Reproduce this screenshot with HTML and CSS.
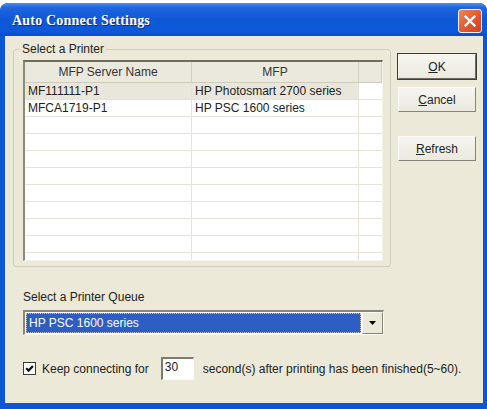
FILE: index.html
```html
<!DOCTYPE html>
<html lang="en">
<head>
    <meta charset="UTF-8">
    <meta name="viewport" content="width=device-width, initial-scale=1.0">
    <title>Auto Connect Settings</title>
    <link rel="stylesheet" href="styles.css">
</head>
<body>

<div class="window">
    <div class="titlebar">
        <span class="title">Auto Connect Settings</span>
        <span class="close">
            <svg width="12" height="12" viewBox="0 0 12 12"><path d="M1.5 1.5 L10.5 10.5 M10.5 1.5 L1.5 10.5" stroke="#fff" stroke-width="2.4" stroke-linecap="square"/></svg>
        </span>
    </div>

    <div class="dialog">
        <div class="top">
            <fieldset class="group">
                <legend>Select a Printer</legend>
                <div class="list">
                    <div class="row head">
                        <div class="cell c1">MFP Server Name</div>
                        <div class="cell c2">MFP</div>
                        <div class="cell c3"></div>
                    </div>
                    <div class="row sel">
                        <div class="cell c1">MF111111-P1</div>
                        <div class="cell c2">HP Photosmart 2700 series</div>
                        <div class="cell c3"></div>
                    </div>
                    <div class="row">
                        <div class="cell c1">MFCA1719-P1</div>
                        <div class="cell c2">HP PSC 1600 series</div>
                        <div class="cell c3"></div>
                    </div>
                    <div class="row"><div class="cell c1"></div><div class="cell c2"></div><div class="cell c3"></div></div>
                    <div class="row"><div class="cell c1"></div><div class="cell c2"></div><div class="cell c3"></div></div>
                    <div class="row"><div class="cell c1"></div><div class="cell c2"></div><div class="cell c3"></div></div>
                    <div class="row"><div class="cell c1"></div><div class="cell c2"></div><div class="cell c3"></div></div>
                    <div class="row"><div class="cell c1"></div><div class="cell c2"></div><div class="cell c3"></div></div>
                    <div class="row"><div class="cell c1"></div><div class="cell c2"></div><div class="cell c3"></div></div>
                    <div class="row"><div class="cell c1"></div><div class="cell c2"></div><div class="cell c3"></div></div>
                    <div class="row"><div class="cell c1"></div><div class="cell c2"></div><div class="cell c3"></div></div>
                    <div class="row"><div class="cell c1"></div><div class="cell c2"></div><div class="cell c3"></div></div>
                </div>
            </fieldset>

            <div class="buttons">
                <button class="btn default"><u>O</u>K</button>
                <button class="btn"><u>C</u>ancel</button>
                <button class="btn refresh"><u>R</u>efresh</button>
            </div>
        </div>

        <div class="queue">
            <div class="label">Select a Printer Queue</div>
            <div class="combo">
                <div class="combo-value"><span>HP PSC 1600 series</span></div>
                <div class="combo-arrow">
                    <svg width="7" height="4" viewBox="0 0 7 4"><path d="M0 0 H7 L3.5 4 Z" fill="#000"/></svg>
                </div>
            </div>
        </div>

        <div class="keep">
            <span class="check">
                <svg width="9" height="9" viewBox="0 0 9 9"><path d="M1.2 4.2 L3.6 6.6 L7.9 2" fill="none" stroke="#111" stroke-width="2.2"/></svg>
            </span>
            <span class="keep-text">Keep connecting for</span>
            <span class="seconds">30</span>
            <span class="after-text">second(s) after printing has been finished(5~60).</span>
        </div>
    </div>
</div>

</body>
</html>
```

FILE: styles.css
```css
body {
    margin: 0;
    background-color: #fff;
    font-family: "Liberation Sans", Arial, sans-serif;
    font-size: 12px;
    color: #222;
}
.window {
    margin-top: 3px;
    width: 487px;
    height: 406px;
    box-sizing: border-box;
    display: flex;
    flex-direction: column;
    background-color: #0D55D2;
    border-radius: 8px 8px 0 0;
    overflow: hidden;
}
.titlebar {
    height: 33px;
    flex-shrink: 0;
    display: flex;
    align-items: center;
    justify-content: space-between;
    padding: 2px 5px 0 12px;
    box-sizing: border-box;
    background: linear-gradient(#4a8ff0 0%, #1f66de 14%, #0f58d6 50%, #0d58da 85%, #0a4cc0 100%);
}
.title {
    font-family: "Liberation Serif", "Times New Roman", serif;
    font-weight: bold;
    font-size: 14px;
    letter-spacing: 0.2px;
    color: #fff;
    text-shadow: 1px 1px 0 #0a2a8a;
}
.close {
    width: 22px;
    height: 22px;
    display: flex;
    align-items: center;
    justify-content: center;
    border: 1px solid #f2f2f2;
    border-radius: 3px;
    background: linear-gradient(135deg, #f0845c 0%, #e4562e 55%, #cf3f1e 100%);
}
.dialog {
    flex-grow: 1;
    margin: 0 4px 6px 5px;
    background-color: #ECE9D8;
    padding: 6px 7px 0 8px;
}
.top {
    display: flex;
    align-items: flex-start;
}
.group {
    margin: 0;
    width: 378px;
    box-sizing: border-box;
    padding: 4px 7px 5px 9px;
    border: 1px solid #D0CEBF;
    border-radius: 3px;
}
.group legend {
    margin-left: -3px;
    padding: 0 2px;
    line-height: 14px;
}
.list {
    height: 198px;
    overflow: hidden;
    background-color: #fff;
    border-style: solid;
    border-width: 2px 1px 1px 2px;
    border-color: #6f6d62 #f4f3ec #f4f3ec #8c8a7e;
}
.row {
    display: flex;
    height: 17px;
    box-sizing: border-box;
    border-bottom: 1px solid #E6E4DA;
}
.row.head {
    height: 21px;
    background-color: #EBE9DE;
    border-bottom: 1px solid #CFCBBB;
}
.row.sel .c1, .row.sel .c2 {
    background-color: #E9E7DC;
}
.cell {
    box-sizing: border-box;
    padding-left: 3px;
    line-height: 16px;
    white-space: nowrap;
    overflow: hidden;
    border-right: 1px solid #E6E4DA;
}
.head .cell {
    line-height: 20px;
    text-align: center;
    padding-left: 0;
    color: #333;
    border-right: 1px solid #D3D0C2;
}
.c1 {
    width: 167px;
}
.c2 {
    width: 167px;
}
.c3 {
    flex-grow: 1;
    border-right: none;
}
.buttons {
    margin: 12px 0 0 7px;
    display: flex;
    flex-direction: column;
    gap: 8px;
}
.btn {
    width: 78px;
    height: 25px;
    font-family: "Liberation Sans", Arial, sans-serif;
    font-size: 12px;
    color: #222;
    background: linear-gradient(#f6f5ef, #ebe9df);
    border: 1px solid;
    border-color: #fbfbf8 #85837a #85837a #fbfbf8;
    padding: 0;
}
.btn.default {
    outline: 1px solid #3c3c38;
    border-color: #f6f5ef #6a6860 #6a6860 #f6f5ef;
}
.btn.refresh {
    margin-top: 16px;
}
.queue {
    padding-left: 10px;
    margin-top: 23px;
}
.label {
    line-height: 14px;
    margin-bottom: 6px;
}
.combo {
    width: 361px;
    height: 25px;
    box-sizing: border-box;
    display: flex;
    border-style: solid;
    border-width: 2px 1px 1px 2px;
    border-color: #8a887c #fbfaf4 #fbfaf4 #8a887c;
    background-color: #fff;
}
.combo-value {
    flex-grow: 1;
    padding: 1px;
}
.combo-value span {
    display: block;
    height: 100%;
    box-sizing: border-box;
    background-color: #2E5EC4;
    border: 1px dotted #c9c9c9;
    color: #fff;
    padding-left: 2px;
    line-height: 18px;
}
.combo-arrow {
    width: 19px;
    display: flex;
    align-items: center;
    justify-content: center;
    background-color: #ECE9D8;
    border: 1px solid;
    border-color: #fbfaf4 #85837a #85837a #fbfaf4;
}
.keep {
    margin-top: 22px;
    padding-left: 10px;
    display: flex;
    align-items: center;
    height: 23px;
}
.check {
    width: 13px;
    height: 13px;
    box-sizing: border-box;
    border: 1px solid #3b3b3b;
    background-color: #fff;
    display: flex;
    align-items: center;
    justify-content: center;
}
.keep-text {
    margin-left: 6px;
}
.seconds {
    margin-left: 12px;
    width: 33px;
    height: 23px;
    box-sizing: border-box;
    background-color: #fff;
    border-style: solid;
    border-width: 2px 1px 1px 2px;
    border-color: #7c7a6e #fbfaf4 #fbfaf4 #7c7a6e;
    padding: 1px 0 0 2px;
    line-height: 14px;
}
.after-text {
    margin-left: 9px;
}
```
